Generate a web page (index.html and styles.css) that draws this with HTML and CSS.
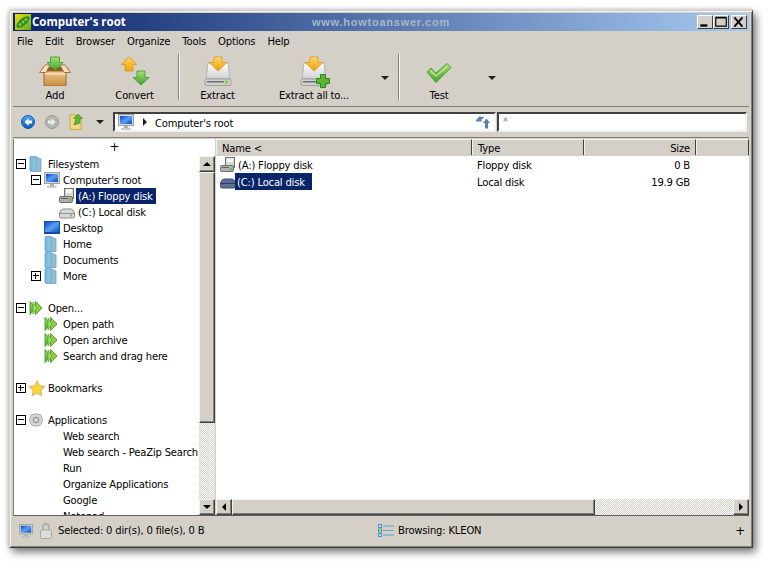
FILE: index.html
```html
<!DOCTYPE html>
<html lang="en">
<head>
<meta charset="utf-8">
<title>Computer's root</title>
<link rel="stylesheet" href="styles.css">
</head>
<body>
<svg class="sprite" xmlns="http://www.w3.org/2000/svg">
  <defs>
    <linearGradient id="gGreen" x1="0" y1="0" x2="0" y2="1"><stop offset="0" stop-color="#a8e070"/><stop offset="1" stop-color="#3fa52a"/></linearGradient>
    <linearGradient id="gOrange" x1="0" y1="0" x2="0" y2="1"><stop offset="0" stop-color="#ffd860"/><stop offset="1" stop-color="#f0a010"/></linearGradient>
    <linearGradient id="gBox" x1="0" y1="0" x2="0" y2="1"><stop offset="0" stop-color="#eec890"/><stop offset="1" stop-color="#c88c40"/></linearGradient>
    <linearGradient id="gDrive" x1="0" y1="0" x2="0" y2="1"><stop offset="0" stop-color="#ffffff"/><stop offset="1" stop-color="#d0d0d0"/></linearGradient>
    <linearGradient id="gFolder" x1="0" y1="0" x2="1" y2="0"><stop offset="0" stop-color="#68b4e8"/><stop offset="1" stop-color="#a0d0d0"/></linearGradient>
    <linearGradient id="gScreen" x1="0" y1="0" x2="1" y2="1"><stop offset="0" stop-color="#0c3cc8"/><stop offset=".5" stop-color="#58a0f0"/><stop offset="1" stop-color="#0c48c0"/></linearGradient>
    <linearGradient id="gBlue" x1="0" y1="0" x2="0" y2="1"><stop offset="0" stop-color="#50a8f0"/><stop offset="1" stop-color="#0858b8"/></linearGradient>
    <linearGradient id="gLogo" x1="0" y1="0" x2="1" y2="1"><stop offset="0" stop-color="#f0d810"/><stop offset="1" stop-color="#60b020"/></linearGradient>

    <symbol id="i-add" viewBox="0 0 32 30">
      <polygon points="4,11 28,11 31,16 26,18 6,18 1,16" fill="#8a5a20"/>
      <rect x="5" y="15" width="22" height="15" fill="url(#gBox)" stroke="#9a6a28"/>
      <rect x="5.500" y="17" width="21" height="1.500" fill="#f8e0b8"/>
      <polygon points="0.5,16.5 6,9 11,9 7,16.5" fill="#f4e0c0" stroke="#9a6a28" stroke-width=".8"/>
      <polygon points="31.5,16.5 26,9 21,9 25,16.5" fill="#f4e0c0" stroke="#9a6a28" stroke-width=".8"/>
      <polygon points="11.5,1 20.5,1 20.5,6.5 24,6.5 16,14.5 8,6.5 11.5,6.5" fill="url(#gGreen)" stroke="#3c9428" stroke-width=".8"/>
    </symbol>
    <symbol id="i-convert" viewBox="0 0 30 30">
      <polygon points="9,1 17,8.5 13,8.5 13,15 5,15 5,8.5 1,8.5" fill="url(#gOrange)" stroke="#e09810" stroke-width=".8"/>
      <polygon points="17,15 25,15 25,21.5 29,21.5 21,29 13,21.5 17,21.5" fill="url(#gGreen)" stroke="#3c9428" stroke-width=".8"/>
    </symbol>
    <symbol id="i-extract" viewBox="0 0 28 30">
      <polygon points="4,7 24,7 26,23 2,23" fill="url(#gDrive)" stroke="#a8a8a8" stroke-width=".8"/>
      <rect x="1" y="23" width="26" height="6.500" rx="1.500" fill="#d0d0d0" stroke="#808080" stroke-width=".6"/>
      <rect x="3" y="25" width="17" height="1.500" fill="#707070"/>
      <rect x="21" y="24.500" width="3" height="3" fill="#80d040"/>
      <polygon points="10,1 18,1 18,6.5 23,6.5 14,15 5,6.5 10,6.5" fill="url(#gOrange)" stroke="#e09810" stroke-width=".8"/>
    </symbol>
    <symbol id="i-test" viewBox="0 0 26 20">
      <polygon points="1,9 5,5 10,10 21,0.5 25,4.5 10,19.5" fill="url(#gGreen)" stroke="#4a9a28" stroke-width=".9"/>
      <polygon points="4,9 5,7 10,12 21,3 22,4 10,14" fill="#d0f0a0" opacity=".7"/>
    </symbol>
    <symbol id="i-monitor" viewBox="0 0 16 16">
      <rect x=".5" y=".5" width="15" height="11" fill="#d8d8d8" stroke="#a0a0a0"/>
      <rect x="2" y="2" width="12" height="8" fill="url(#gScreen)"/>
      <rect x="6" y="12" width="4" height="2" fill="#b0b0b0"/>
      <rect x="3.5" y="14" width="9" height="1.5" fill="#d0d0d0" stroke="#a8a8a8" stroke-width=".4"/>
    </symbol>
    <symbol id="i-desktop" viewBox="0 0 16 16">
      <rect x=".5" y="1.5" width="15" height="11" fill="url(#gScreen)" stroke="#1a50a8"/>
      <rect x="0" y="12" width="16" height="2" fill="#1848a8"/>
    </symbol>
    <symbol id="i-folder" viewBox="0 0 14 16">
      <rect x="1" y=".5" width="7" height="15" rx="1" fill="url(#gFolder)" stroke="#70a0c8" stroke-width=".8"/>
      <polygon points="7,1 12,3 12,15.5 7,15.5" fill="#90c0d0" stroke="#70a0c8" stroke-width=".8"/>
    </symbol>
    <symbol id="i-floppy" viewBox="0 0 16 16">
      <rect x="5.5" y=".5" width="9" height="10" fill="#d8d8d8" stroke="#707070"/>
      <rect x="7" y="1" width="6" height="4" fill="#f4f4f4"/>
      <rect x=".5" y="8.5" width="13" height="6" rx="1.5" fill="#b0b0b0" stroke="#707070"/>
      <rect x="2" y="10" width="7" height="1" fill="#606060"/>
      <rect x="10" y="11" width="2" height="2" fill="#60c030"/>
    </symbol>
    <symbol id="i-drive" viewBox="0 0 16 16">
      <path d="M.5 9 Q2 5 4 5 H12 Q14 5 15.5 9 V12.5 Q15.5 14 14 14 H2 Q.5 14 .5 12.5Z" fill="#d8d8d8" stroke="#8c8c8c"/>
      <rect x="1" y="9" width="14" height="1" fill="#909090"/>
      <rect x="11" y="10.5" width="2" height="2" fill="#70c840"/>
    </symbol>
    <symbol id="i-drivesel" viewBox="0 0 16 16">
      <path d="M.5 9 Q2 5 4 5 H12 Q14 5 15.5 9 V12.5 Q15.5 14 14 14 H2 Q.5 14 .5 12.5Z" fill="#5a6c98" stroke="#3c4c78"/>
      <rect x="1" y="9" width="14" height="1" fill="#303c68"/>
      <rect x="11" y="10.5" width="2" height="2" fill="#50a040"/>
    </symbol>
    <symbol id="i-go" viewBox="0 0 14 14">
      <polygon points="1,.5 6,7 1,13.5" fill="url(#gGreen)" stroke="#4a9a20" stroke-width=".9"/>
      <polygon points="6.5,.5 13,7 6.5,13.5" fill="#8cd040" stroke="#4a9a20" stroke-width=".9"/>
      <polygon points="4,1 8,7 4,13" fill="#a8e070" stroke="#4a9a20" stroke-width=".7"/>
    </symbol>
    <symbol id="i-star" viewBox="0 0 18 18">
      <polygon points="9,.5 11.6,6 17.5,6.8 13.2,11 14.4,17 9,14 3.6,17 4.8,11 .5,6.8 6.4,6" fill="#ffd838" stroke="#d8a040"/>
    </symbol>
    <symbol id="i-gear" viewBox="0 0 14 14">
      <polygon points="7,.5 9,1.5 11.5,1.5 12.5,4 13.5,7 12.5,10 11,12.5 9,12.5 7,13.5 5,12.5 3,12.5 1.5,10 .5,7 1.5,4 2.5,1.5 5,1.5" fill="#d8d8d8" stroke="#a8a8a8"/>
      <circle cx="7" cy="7" r="3" fill="#c0c0c0" stroke="#989898"/>
      <circle cx="7" cy="7" r="1" fill="#f0f0f0"/>
    </symbol>
    <symbol id="i-lock" viewBox="0 0 12 16">
      <path d="M3 7 V4 Q3 1 6 1 Q9 1 9 4 V7" fill="none" stroke="#a8a8a8" stroke-width="1.4"/>
      <rect x=".5" y="7" width="11" height="8.5" rx="1" fill="#dcdcdc" stroke="#a8a8a8"/>
    </symbol>
    <symbol id="i-list" viewBox="0 0 16 14">
      <rect x=".5" y=".5" width="3" height="3" fill="#fff" stroke="#4890d8"/>
      <rect x="1.5" y="1.5" width="1" height="1" fill="#d83030"/>
      <rect x=".5" y="5" width="3" height="3" fill="#fff" stroke="#48a070"/>
      <rect x="1.5" y="6" width="1" height="1" fill="#30a030"/>
      <rect x=".5" y="9.5" width="3" height="3" fill="#fff" stroke="#4890d8"/>
      <rect x="1.5" y="10.5" width="1" height="1" fill="#3060d8"/>
      <path d="M5 2 H16 M5 6.5 H16 M5 11 H16" stroke="#58a8d0" stroke-width="1"/>
    </symbol>
  </defs>
</svg>

<div class="window">
  <header class="titlebar">
    <svg class="logo" viewBox="0 0 16 16"><rect width="16" height="16" fill="url(#gLogo)"/><ellipse cx="8" cy="8" rx="8" ry="3.6" transform="rotate(-40 8 8)" fill="#2c8a20"/><circle cx="5" cy="10.5" r="1.5" fill="#80c838"/><circle cx="8" cy="8" r="1.5" fill="#80c838"/><circle cx="11" cy="5.5" r="1.5" fill="#80c838"/></svg>
    <span class="title">Computer's root</span>
    <span class="watermark">www.howtoanswer.com</span>
    <div class="winbtns">
      <span class="winbtn"><svg viewBox="0 0 12 10"><rect x="2" y="7" width="6" height="2" fill="#000"/></svg></span>
      <span class="winbtn"><svg viewBox="0 0 12 10"><path d="M1.5 1.5 H10.5 V8.5 H1.5Z M1.5 1 H10.5" fill="none" stroke="#000"/></svg></span>
      <span class="winbtn winbtn-close"><svg viewBox="0 0 12 10"><path d="M2 1 L9 9 M9 1 L2 9" stroke="#000" stroke-width="1.6"/></svg></span>
    </div>
  </header>

  <nav class="menubar">
    <span>File</span><span>Edit</span><span>Browser</span><span>Organize</span><span>Tools</span><span>Options</span><span>Help</span>
  </nav>

  <div class="toolbar">
    <div class="tool tool-add"><svg class="tool-icon ic-add"><use href="#i-add"/></svg><span>Add</span></div>
    <div class="tool tool-convert"><svg class="tool-icon ic-convert"><use href="#i-convert"/></svg><span>Convert</span></div>
    <div class="sep"></div>
    <div class="tool tool-extract"><svg class="tool-icon ic-extract"><use href="#i-extract"/></svg><span>Extract</span></div>
    <div class="tool tool-all">
      <span class="tool-stack"><svg class="tool-icon ic-extract"><use href="#i-extract"/></svg><svg class="plus" viewBox="0 0 14 14"><polygon points="4.5,.5 9.5,.5 9.5,4.5 13.5,4.5 13.5,9.5 9.5,9.5 9.5,13.5 4.5,13.5 4.5,9.5 .5,9.5 .5,4.5 4.5,4.5" fill="#58b830" stroke="#2e8a18"/></svg></span>
      <span>Extract all to...</span>
    </div>
    <span class="drop"></span>
    <div class="sep sep-b"></div>
    <div class="tool tool-test"><svg class="tool-icon ic-test"><use href="#i-test"/></svg><span>Test</span></div>
    <span class="drop drop-test"></span>
  </div>

  <div class="addressbar">
    <svg class="nav" viewBox="0 0 14 14"><circle cx="7" cy="7" r="6.5" fill="url(#gBlue)" stroke="#1060b8"/><path d="M7.5 3 L3.5 7 L7.5 11 V8.5 H11 V5.5 H7.5Z" fill="#fff"/></svg>
    <svg class="nav" viewBox="0 0 14 14"><circle cx="7" cy="7" r="6.5" fill="#b4b4b0" stroke="#989894"/><path d="M6.5 3 L10.5 7 L6.5 11 V8.5 H3 V5.5 H6.5Z" fill="#e8e8e4"/></svg>
    <svg class="nav nav-up" viewBox="0 0 14 16"><polygon points="1,1 6,1 12,3 12,15.5 1,15.5" fill="#f4d880" stroke="#c8a850"/><polygon points="9,0 13.5,4.5 11,4.5 11,9 5,11 7,4.5 4.5,4.5" fill="#58b830" stroke="#388a20" stroke-width=".6"/></svg>
    <span class="drop drop-nav"></span>
    <div class="field field-path">
      <svg class="path-icon"><use href="#i-monitor"/></svg>
      <span class="crumb"></span>
      <span class="path-text">Computer's root</span>
      <svg class="refresh" viewBox="0 0 14 14"><path d="M0 5 L4 1 L5 2 Q6.500 1.500 8 2 L6.500 4 Q5.500 4 5 5 L6.500 6.500 H0Z" fill="#5880b0"/><path d="M14 8 L10.500 3.500 L7 8 H9 V13.500 H12 V8Z" fill="#5880b0"/></svg>
    </div>
    <div class="field field-filter">*</div>
  </div>

  <main class="panes">
    <aside class="left">
      <div class="plus-row">+</div>
      <div class="left-body">
        <div class="tree">
          <div class="row"><span class="tg minus"></span><svg class="ic ic-f"><use href="#i-folder"/></svg><span class="t t0">Filesystem</span></div>
          <div class="row l1"><span class="tg minus"></span><svg class="ic"><use href="#i-monitor"/></svg><span class="t">Computer's root</span></div>
          <div class="row l2"><svg class="ic"><use href="#i-floppy"/></svg><span class="t sel">(A:) Floppy disk</span></div>
          <div class="row l2"><svg class="ic"><use href="#i-drive"/></svg><span class="t tp">(C:) Local disk</span></div>
          <div class="row l1b"><svg class="ic"><use href="#i-desktop"/></svg><span class="t">Desktop</span></div>
          <div class="row l1b"><svg class="ic ic-f"><use href="#i-folder"/></svg><span class="t tf">Home</span></div>
          <div class="row l1b"><svg class="ic ic-f"><use href="#i-folder"/></svg><span class="t tf">Documents</span></div>
          <div class="row l1"><span class="tg plus-t"></span><svg class="ic ic-f"><use href="#i-folder"/></svg><span class="t tf">More</span></div>
          <div class="row"></div>
          <div class="row"><span class="tg minus"></span><svg class="ic ic-go"><use href="#i-go"/></svg><span class="t t0">Open...</span></div>
          <div class="row l1b"><svg class="ic ic-go"><use href="#i-go"/></svg><span class="t tf">Open path</span></div>
          <div class="row l1b"><svg class="ic ic-go"><use href="#i-go"/></svg><span class="t tf">Open archive</span></div>
          <div class="row l1b"><svg class="ic ic-go"><use href="#i-go"/></svg><span class="t tf">Search and drag here</span></div>
          <div class="row"></div>
          <div class="row"><span class="tg plus-t"></span><svg class="ic ic-star"><use href="#i-star"/></svg><span class="t t-star">Bookmarks</span></div>
          <div class="row"></div>
          <div class="row"><span class="tg minus"></span><svg class="ic ic-go"><use href="#i-gear"/></svg><span class="t t0">Applications</span></div>
          <div class="row l1c"><span class="t">Web search</span></div>
          <div class="row l1c"><span class="t">Web search - PeaZip Search</span></div>
          <div class="row l1c"><span class="t">Run</span></div>
          <div class="row l1c"><span class="t">Organize Applications</span></div>
          <div class="row l1c"><span class="t">Google</span></div>
          <div class="row l1c"><span class="t">Notepad</span></div>
        </div>
        <div class="vscroll">
          <span class="sb-btn"><i class="arr up"></i></span>
          <span class="sb-thumb sb-thumb-v"></span>
          <span class="sb-track"></span>
          <span class="sb-btn"><i class="arr down"></i></span>
        </div>
      </div>
    </aside>

    <section class="right">
      <div class="thead">
        <span class="th th-name">Name &lt;</span>
        <span class="th th-type">Type</span>
        <span class="th th-size">Size</span>
        <span class="th th-rest"></span>
      </div>
      <div class="tbody">
        <div class="frow">
          <span class="c-name"><svg class="ic"><use href="#i-floppy"/></svg><span class="t">(A:) Floppy disk</span></span>
          <span class="c-type">Floppy disk</span>
          <span class="c-size">0 B</span>
        </div>
        <div class="frow">
          <span class="c-name"><svg class="ic"><use href="#i-drivesel"/></svg><span class="t sel sel-wide">(C:) Local disk</span></span>
          <span class="c-type">Local disk</span>
          <span class="c-size">19.9 GB</span>
        </div>
      </div>
      <div class="hscroll">
        <span class="sb-btn"><i class="arr left-a"></i></span>
        <span class="sb-thumb sb-thumb-h"></span>
        <span class="sb-track"></span>
        <span class="sb-btn"><i class="arr right-a"></i></span>
      </div>
    </section>
  </main>

  <footer class="status">
    <svg class="st-mon"><use href="#i-monitor"/></svg>
    <svg class="st-lock"><use href="#i-lock"/></svg>
    <span class="st-sel">Selected: 0 dir(s), 0 file(s), 0 B</span>
    <svg class="st-list"><use href="#i-list"/></svg>
    <span class="st-browse">Browsing: KLEON</span>
    <span class="st-plus">+</span>
  </footer>
</div>
</body>
</html>
```
FILE: styles.css
```css
* { box-sizing: border-box; }
html, body { margin: 0; height: 100%; }
body {
  background: #fff;
  padding: 10px 0 0 9px;
  font: 10px/16px "DejaVu Sans", "Liberation Sans", sans-serif;
  letter-spacing: -.18px;
  color: #000;
  overflow: hidden;
}
.sprite { display: block; width: 0; height: 0; overflow: hidden; }

.window {
  width: 744px;
  height: 538px;
  background: #d4d0c8;
  border-style: solid;
  border-width: 1px;
  border-color: #d4d0c8 #404040 #404040 #d4d0c8;
  box-shadow: inset 1px 1px 0 #f4f2ee, inset -1px -1px 0 #808080, 3px 4px 8px rgba(0,0,0,.55), -1px -1px 4px rgba(0,0,0,.15);
  padding: 2px 3px 1px 3px;
  display: flex;
  flex-direction: column;
  position: relative;
}

/* title bar */
.titlebar {
  height: 18px;
  flex: none;
  background: linear-gradient(90deg, #0a246a, #a6caf0);
  display: flex;
  align-items: center;
  padding: 0 2px;
  position: relative;
}
.logo { width: 16px; height: 16px; flex: none; }
.title { margin-left: 1px; color: #fff; letter-spacing: 0; font: bold 11.5px/18px "Open Sans", "Liberation Sans", sans-serif; }
.watermark {
  position: absolute;
  left: 299px;
  top: 0;
  color: #a9b6c9;
  font: bold 11px/18px "Liberation Sans", sans-serif;
  letter-spacing: .75px;
}
.winbtns { margin-left: auto; display: flex; }
.winbtn {
  width: 16px;
  height: 14px;
  background: #d4d0c8;
  border: 1px solid;
  border-color: #fff #404040 #404040 #fff;
  display: block;
}
.winbtn svg { display: block; width: 14px; height: 12px; }
.winbtn-close { margin-left: 2px; }

/* menu */
.menubar {
  height: 21px;
  flex: none;
  display: flex;
  gap: 12px;
  padding: 3px 0 0 4px;
  line-height: 16px;
}

/* toolbar */
.toolbar {
  height: 55px;
  flex: none;
  display: flex;
  align-items: flex-start;
  border-bottom: 1px solid #808078;
}
.tool {
  flex: none;
  height: 53px;
  display: flex;
  flex-direction: column;
  align-items: center;
  justify-content: flex-end;
  padding-bottom: 2px;
  line-height: 14px;
}
.tool-add { width: 84px; }
.tool-convert { width: 75px; }
.tool-extract { width: 67px; }
.tool-all { width: 126px; }
.tool-test { width: 70px; }
.tool-icon { display: block; }
.ic-add { width: 32px; height: 30px; margin-bottom: 3px; }
.ic-convert { width: 30px; height: 30px; margin-bottom: 3px; }
.ic-extract { width: 28px; height: 30px; margin-bottom: 3px; }
.ic-test { width: 26px; height: 20px; margin-bottom: 6px; }
.tool-stack { position: relative; display: block; }
.plus { position: absolute; left: 16px; top: 18px; width: 14px; height: 14px; }
.sep {
  flex: none;
  width: 2px;
  height: 46px;
  margin: 2px 4px 0 6px;
  border-left: 1px solid #808078;
  border-right: 1px solid #fff;
}
.sep-b { margin-left: 5px; }
.drop {
  flex: none;
  width: 0;
  height: 0;
  border: 4px solid transparent;
  border-top-color: #202020;
  border-bottom-width: 0;
  margin: 24px 4px 0 4px;
  box-sizing: content-box;
}
.drop-test { margin-left: 14px; }

/* address bar */
.addressbar {
  height: 30px;
  flex: none;
  display: flex;
  align-items: center;
  padding-left: 8px;
}
.nav { display: block; width: 14px; height: 14px; flex: none; margin-right: 10px; }
.nav-up { height: 16px; }
.drop-nav { margin: 0 9px 0 3px; }
.field {
  height: 20px;
  flex: none;
  background: #fff;
  border: 2px solid;
  border-color: #404040 #f4f2ee #f4f2ee #404040;
  display: flex;
  align-items: center;
}
.field-path { width: 383px; margin-right: 1px; padding-left: 3px; }
.field-filter { width: 250px; color: #808080; padding-left: 4px; line-height: 16px; align-items: flex-start; }
.path-icon { width: 16px; height: 16px; flex: none; }
.crumb {
  width: 0; height: 0;
  border: 4px solid transparent;
  border-left-color: #202020;
  border-right-width: 0;
  margin-left: 9px;
  box-sizing: content-box;
}
.path-text { margin-left: 8px; padding-top: 4px; }
.refresh { width: 14px; height: 14px; margin-left: auto; margin-right: 4px; }

/* panes */
.panes {
  flex: 1;
  min-height: 0;
  display: flex;
  border-top: 1px solid #808078;
  padding-top: 1px;
  border-bottom: 1px solid #606060;
}
.left {
  width: 202px;
  flex: none;
  background: #fff;
  border-left: 1px solid #808078;
  display: flex;
  flex-direction: column;
  min-height: 0;
}
.plus-row { height: 17px; flex: none; text-align: center; line-height: 17px; font-size: 12px; }
.left-body { flex: 1; min-height: 0; display: flex; }
.tree { flex: 1; min-width: 0; overflow: hidden; }
.row {
  height: 16px;
  display: flex;
  align-items: center;
  white-space: nowrap;
  padding-left: 2px;
}
.row .t { margin-left: 4px; height: 16px; line-height: 18px; }
.row .t0 { margin-left: 5px; }
.row .t-star { margin-left: 3px; }
.row.l1 { padding-left: 17px; }
.row.l1 .t { margin-left: 3px; }
.row.l1 .tf { margin-left: 5px; }
.row.l1 .tg { margin-right: 3px; }
.row.l1b { padding-left: 30px; }
.row.l1b .t { margin-left: 3px; }
.row.l1b .tf { margin-left: 5px; }
.row.l1c { padding-left: 49px; }
.row.l1c .t { margin-left: 0; }
.row.l2 { padding-left: 45px; }
.row.l2 .t { margin-left: 1px; }
.row.l2 .tp { margin-left: 3px; }
.tg {
  flex: none;
  width: 10px;
  height: 10px;
  border: 1px solid #000;
  background: #fff;
  margin-right: 3px;
  position: relative;
}
.tg::before {
  content: "";
  position: absolute;
  left: 1px; top: 3px;
  width: 6px; height: 2px;
  border-top: 1px solid #000;
}
.plus-t::after {
  content: "";
  position: absolute;
  left: 3px; top: 1px;
  height: 6px; width: 2px;
  border-left: 1px solid #000;
}
.ic { display: block; flex: none; width: 16px; height: 16px; }
.ic-f { width: 14px; }
.ic-go { width: 14px; height: 14px; }
.ic-star { width: 16px; height: 17px; overflow: visible; }
.sel { background: #0a246a; color: #fff; padding: 0 3px 0 2px; }

.vscroll {
  flex: none;
  width: 16px;
  display: flex;
  flex-direction: column;
}
.sb-btn, .sb-thumb {
  flex: none;
  background: #d4d0c8;
  border: 1px solid;
  border-color: #f4f2ee #404040 #404040 #f4f2ee;
  box-shadow: inset -1px -1px 0 #808078;
  display: flex;
  align-items: center;
  justify-content: center;
}
.sb-btn { width: 16px; height: 16px; }
.sb-thumb-v { height: 251px; }
.sb-track {
  flex: 1;
  background: repeating-conic-gradient(#d4d0c8 0 25%, #fff 0 50%) 0 0 / 2px 2px;
}
.arr { display: block; width: 0; height: 0; border: 4px solid transparent; box-sizing: content-box; }
.arr.up { border-bottom-color: #000; border-top-width: 0; }
.arr.down { border-top-color: #000; border-bottom-width: 0; }
.arr.left-a { border-right-color: #000; border-left-width: 0; }
.arr.right-a { border-left-color: #000; border-right-width: 0; }

.right {
  flex: 1;
  min-width: 0;
  margin-left: 1px;
  background: #fff;
  display: flex;
  flex-direction: column;
}
.thead { height: 17px; flex: none; display: flex; background: #d4d0c8; }
.th {
  flex: none;
  height: 16px;
  padding: 0 5px;
  border-style: solid;
  border-width: 1px 1px 0 1px;
  border-color: #f4f2ee #404040 #fff #f4f2ee;
  line-height: 17px;
}
.th-name { width: 256px; }
.th-type { width: 112px; }
.th-size { width: 112px; text-align: right; }
.th-rest { flex: 1; }
.tbody { flex: 1; min-height: 0; }
.frow { height: 17px; display: flex; align-items: center; white-space: nowrap; line-height: 19px; }
.c-name { width: 256px; display: flex; align-items: center; padding-left: 4px; height: 17px; flex: none; }
.frow .t { padding: 0 2px; height: 17px; line-height: 19px; }
.frow .sel-wide { padding-right: 7px; margin-left: -1px; }
.c-type { width: 112px; height: 17px; padding-left: 5px; flex: none; }
.c-size { width: 112px; height: 17px; text-align: right; padding-right: 6px; flex: none; }

.hscroll { height: 16px; flex: none; display: flex; }
.sb-thumb-h { width: 363px; }

/* status bar */
.status {
  flex: none;
  height: 30px;
  display: flex;
  align-items: center;
  padding: 0 4px 0 6px;
}
.st-mon { width: 14px; height: 14px; flex: none; margin-right: 7px; }
.st-lock { width: 12px; height: 16px; flex: none; margin-right: 6px; }
.st-sel { width: 320px; flex: none; }
.st-list { width: 16px; height: 14px; flex: none; margin-right: 4px; }
.st-plus { margin-left: auto; font-size: 12px; }
```
